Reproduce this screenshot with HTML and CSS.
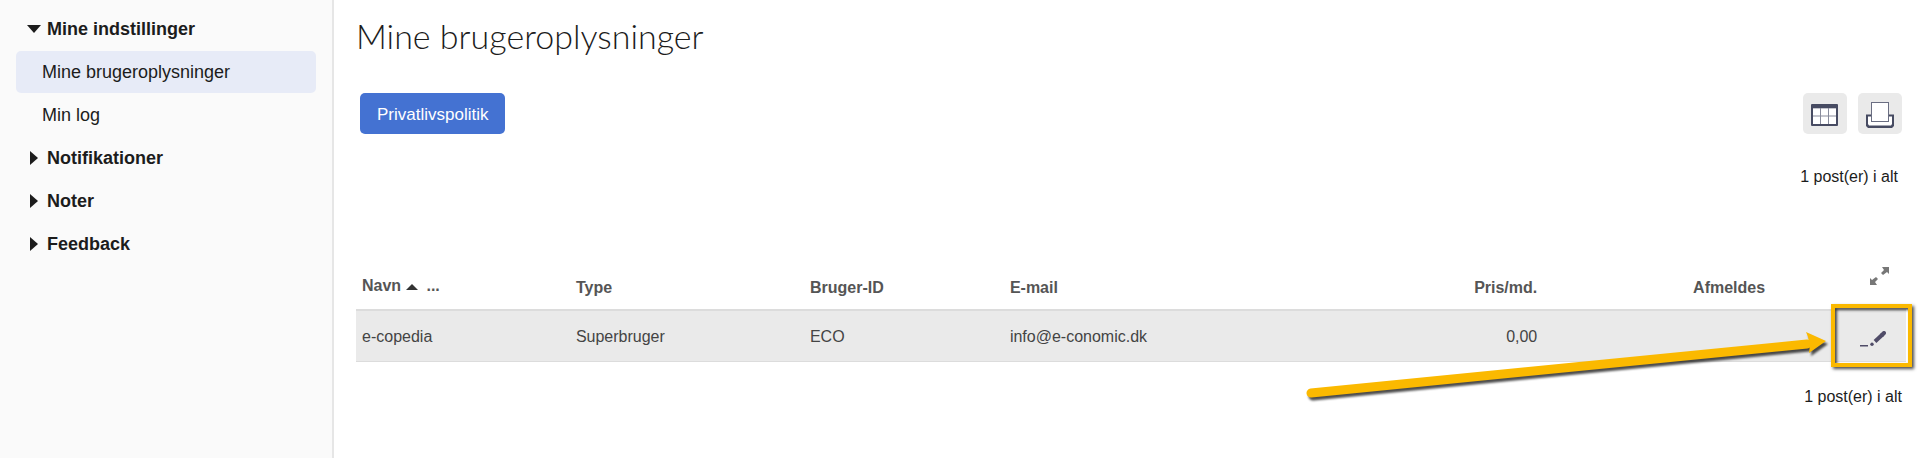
FILE: index.html
```html
<!DOCTYPE html>
<html lang="da">

<head>
  <meta charset="utf-8">
  <meta name="viewport" content="width=device-width">
  <title>Mine brugeroplysninger</title>
  <link rel="stylesheet" href="styles.css">
</head>

<body>
  <div class="layout">

    <nav class="sidebar">
      <a href="#" class="nav-group">
        <svg class="caret" width="14" height="14" viewBox="0 0 14 14"><path d="M0 3H14L7 11Z" /></svg>
        Mine indstillinger
      </a>
      <a href="#" class="nav-item active">Mine brugeroplysninger</a>
      <a href="#" class="nav-item">Min log</a>
      <a href="#" class="nav-group">
        <svg class="caret" width="14" height="14" viewBox="0 0 14 14"><path d="M3 0V14L11 7Z" /></svg>
        Notifikationer
      </a>
      <a href="#" class="nav-group">
        <svg class="caret" width="14" height="14" viewBox="0 0 14 14"><path d="M3 0V14L11 7Z" /></svg>
        Noter
      </a>
      <a href="#" class="nav-group">
        <svg class="caret" width="14" height="14" viewBox="0 0 14 14"><path d="M3 0V14L11 7Z" /></svg>
        Feedback
      </a>
    </nav>

    <main class="content">
      <h1>Mine brugeroplysninger</h1>

      <div class="toolbar">
        <button class="btn-primary">Privatlivspolitik</button>
        <div class="tools">
          <button class="btn-icon" aria-label="Kolonner">
            <svg width="28" height="22" viewBox="0 0 28 22">
              <rect x="0" y="0" width="27" height="22" rx="1" fill="#474b62" />
              <rect x="2" y="4" width="23" height="16" fill="#888b9b" />
              <path d="M2 4.5h7v7H2zM10 4.5h7v7h-7zM18 4.5h7v7h-7zM2 12.5h7V20H2zM10 12.5h7V20h-7zM18 12.5h7V20h-7z" fill="#fff" />
            </svg>
          </button>
          <button class="btn-icon" aria-label="Udskriv">
            <svg width="28" height="26" viewBox="0 0 28 26">
              <path d="M0 12.5H28V24L26 26H2L0 24Z" fill="#474b62" />
              <path d="M2 14.5H26V22L25 23.5H3L2 22Z" fill="#fff" />
              <rect x="5" y="0" width="18" height="20" fill="#6a6e82" />
              <rect x="6" y="1" width="16" height="18" fill="#fff" />
            </svg>
          </button>
        </div>
      </div>

      <p class="count count-top">1 post(er) i alt</p>

      <table class="users">
        <colgroup>
          <col class="col-name">
          <col class="col-type">
          <col class="col-id">
          <col class="col-mail">
          <col class="col-price">
          <col class="col-end">
          <col class="col-edit">
        </colgroup>
        <thead>
          <tr>
            <th class="sorted">Navn <svg width="12" height="7" viewBox="0 0 12 7"><path d="M0 6L6 0L12 6Z" fill="#333" /></svg>&nbsp; ...</th>
            <th>Type</th>
            <th>Bruger-ID</th>
            <th>E-mail</th>
            <th class="right">Pris/md.</th>
            <th class="right">Afmeldes</th>
            <th class="expand">
              <button class="btn-plain" aria-label="Udvid">
                <svg width="19" height="18" viewBox="0 0 19 18" fill="#777">
                  <path d="M12 0H19V7L17 5L13 8L11 6L14 3Z" />
                  <path d="M0 11L2 13L6 10L8 12L5 15L7 18H0Z" />
                </svg>
              </button>
            </th>
          </tr>
        </thead>
        <tbody>
          <tr>
            <td>e-copedia</td>
            <td>Superbruger</td>
            <td>ECO</td>
            <td>info@e-conomic.dk</td>
            <td class="right">0,00</td>
            <td></td>
            <td class="edit">
              <button class="btn-plain" aria-label="Rediger">
                <svg width="26" height="16" viewBox="0 0 26 16" fill="#504c68">
                  <path d="M0 14H8V15.5H0Z" />
                  <circle cx="12" cy="13.3" r="1.7" />
                  <path d="M15 10.5L22.5 3.5" stroke="#504c68" stroke-width="4" />
                  <path d="M22 4L24 2" stroke="#504c68" stroke-width="4" stroke-linecap="round" />
                </svg>
              </button>
              <!-- marker round the edit button -->
              <svg class="arrow" width="530" height="80" viewBox="0 0 530 80">
                <path d="M11 62L507 13" stroke="#fbb900" stroke-width="9" stroke-linecap="round" />
                <path d="M506 1L526 10L509 22Q511 11 506 1Z" fill="#fbb900" />
              </svg>
              <span class="marker"></span>
            </td>
          </tr>
        </tbody>
      </table>

      <p class="count count-bottom">1 post(er) i alt</p>
    </main>

  </div>
</body>

</html>
```
FILE: styles.css
```css
* {
  box-sizing: border-box;
}

body {
  margin: 0;
  font-family: "Liberation Sans", Arial, sans-serif;
  font-size: 16px;
  color: #1c1c1c;
  background: #fff;
}

.layout {
  display: flex;
  min-height: 100vh;
}

/* sidebar */
.sidebar {
  flex: 0 0 334px;
  display: flex;
  flex-direction: column;
  gap: 1px;
  padding: 8px 16px;
  background: #fafafa;
  border-right: 2px solid #e6e6e6;
}

.sidebar a {
  display: flex;
  align-items: center;
  height: 42px;
  border-radius: 5px;
  font-size: 18px;
  color: #1c1c1c;
  text-decoration: none;
}

.nav-group {
  gap: 6px;
  padding-left: 11px;
  font-weight: bold;
}

.nav-item {
  padding-left: 26px;
}

.sidebar a.active {
  background: #e7ebf7;
}

.caret {
  fill: #1c1c1c;
}

/* content */
.content {
  flex: 1;
  padding: 15px 14px 16px 22px;
}

h1 {
  margin: 0;
  font-family: Lato, sans-serif;
  font-size: 34px;
  font-weight: 300;
  line-height: 42px;
}

.toolbar {
  display: flex;
  justify-content: space-between;
  margin-top: 36px;
  padding: 0 4px;
}

.tools {
  display: flex;
  gap: 11px;
}

button {
  border: none;
  font-family: inherit;
  cursor: pointer;
}

.btn-primary {
  height: 41px;
  padding: 2px 17px 0;
  background: #4472d2;
  border-radius: 5px;
  color: #fff;
  font-size: 17px;
}

.btn-icon {
  display: flex;
  align-items: center;
  justify-content: center;
  width: 44px;
  height: 41px;
  padding: 2px 0 0;
  background: #eaeaea;
  border-radius: 5px;
}

.btn-plain {
  padding: 0;
  background: none;
}

.btn-plain svg {
  display: block;
}

.count {
  margin: 0;
  line-height: 20px;
  text-align: right;
}

.count-top {
  margin-top: 33px;
  padding-right: 8px;
}

.count-bottom {
  margin-top: 25px;
  padding-right: 4px;
}

/* table */
.users {
  width: 100%;
  margin-top: 70px;
  border-collapse: separate;
  border-spacing: 0;
  table-layout: fixed;
}

.col-name { width: 13.8%; }
.col-type { width: 15.1%; }
.col-id { width: 12.9%; }
.col-mail { width: 21.3%; }
.col-price { width: 13.5%; }
.col-end { width: 14.7%; }
.col-edit { width: 8.7%; }

.users th {
  height: 54px;
  padding: 10px 6px 0;
  border-bottom: 2px solid #dcdcdc;
  color: #555;
  text-align: left;
}

.users td {
  height: 51px;
  padding: 2px 6px 0;
  background: #eaeaea;
  border-bottom: 1px solid #dcdcdc;
  color: #444;
}

.users th.sorted {
  padding-top: 6px;
}

.users .right {
  text-align: right;
}

.users .expand {
  padding: 10px 17px 0 0;
  vertical-align: top;
}

.users .edit {
  position: relative;
  padding: 6px 20px 0 0;
}

.expand .btn-plain,
.edit .btn-plain {
  display: block;
  margin-left: auto;
}

.marker {
  position: absolute;
  top: -7px;
  right: -6px;
  width: 81px;
  height: 63px;
  border: 4px solid #fbb900;
  box-shadow: 2px 2px 3px rgba(0, 0, 0, 0.7), inset 2px 2px 3px rgba(0, 0, 0, 0.7);
}

.arrow {
  position: absolute;
  top: 20px;
  right: 76px;
  fill: none;
  filter: drop-shadow(2px 3px 1px rgba(0, 0, 0, 0.7));
  pointer-events: none;
}
```
